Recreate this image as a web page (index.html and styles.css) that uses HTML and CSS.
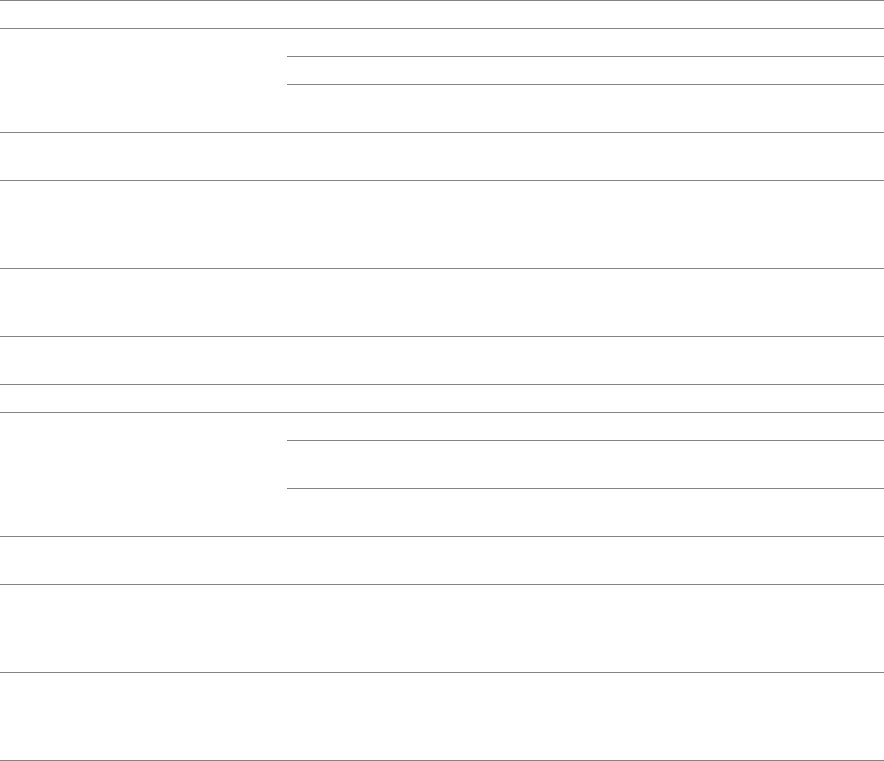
FILE: index.html
```html
<!DOCTYPE html>
<html lang="en">
<head>
<meta charset="utf-8">
<title>Table</title>
<link rel="stylesheet" href="styles.css">
</head>
<body>
<div class="table">
  <div class="row h28"><div class="cell"></div><div class="cell"></div></div>
  <div class="row">
    <div class="cell"></div>
    <div class="sub">
      <div class="subrow first h28"></div>
      <div class="subrow h28"></div>
      <div class="subrow h48"></div>
    </div>
  </div>
  <div class="row h48"><div class="cell"></div><div class="cell"></div></div>
  <div class="row h88"><div class="cell"></div><div class="cell"></div></div>
  <div class="row h68"><div class="cell"></div><div class="cell"></div></div>
  <div class="row h48"><div class="cell"></div><div class="cell"></div></div>
  <div class="row h28"><div class="cell"></div><div class="cell"></div></div>
  <div class="row">
    <div class="cell"></div>
    <div class="sub">
      <div class="subrow first h28"></div>
      <div class="subrow h48"></div>
      <div class="subrow h48"></div>
    </div>
  </div>
  <div class="row h48"><div class="cell"></div><div class="cell"></div></div>
  <div class="row h88"><div class="cell"></div><div class="cell"></div></div>
  <div class="row h88"><div class="cell"></div><div class="cell"></div></div>
</div>
</body>
</html>
```
FILE: styles.css
```css
html, body {
  margin: 0;
  padding: 0;
  background: #ffffff;
  font-family: "Liberation Sans", Arial, sans-serif;
}
.table {
  display: flex;
  flex-direction: column;
  width: 884px;
  border-bottom: 1px solid #848484;
}
.row {
  display: grid;
  grid-template-columns: 287px 1fr;
  border-top: 1px solid #848484;
  box-sizing: border-box;
}
.sub {
  display: flex;
  flex-direction: column;
}
.subrow {
  box-sizing: border-box;
  border-top: 1px solid #848484;
}
.subrow.first {
  border-top: none;
}
.h28 { height: 28px; }
.h48 { height: 48px; }
.h68 { height: 68px; }
.h88 { height: 88px; }
.subrow.first.h28 { height: 27px; }
```
